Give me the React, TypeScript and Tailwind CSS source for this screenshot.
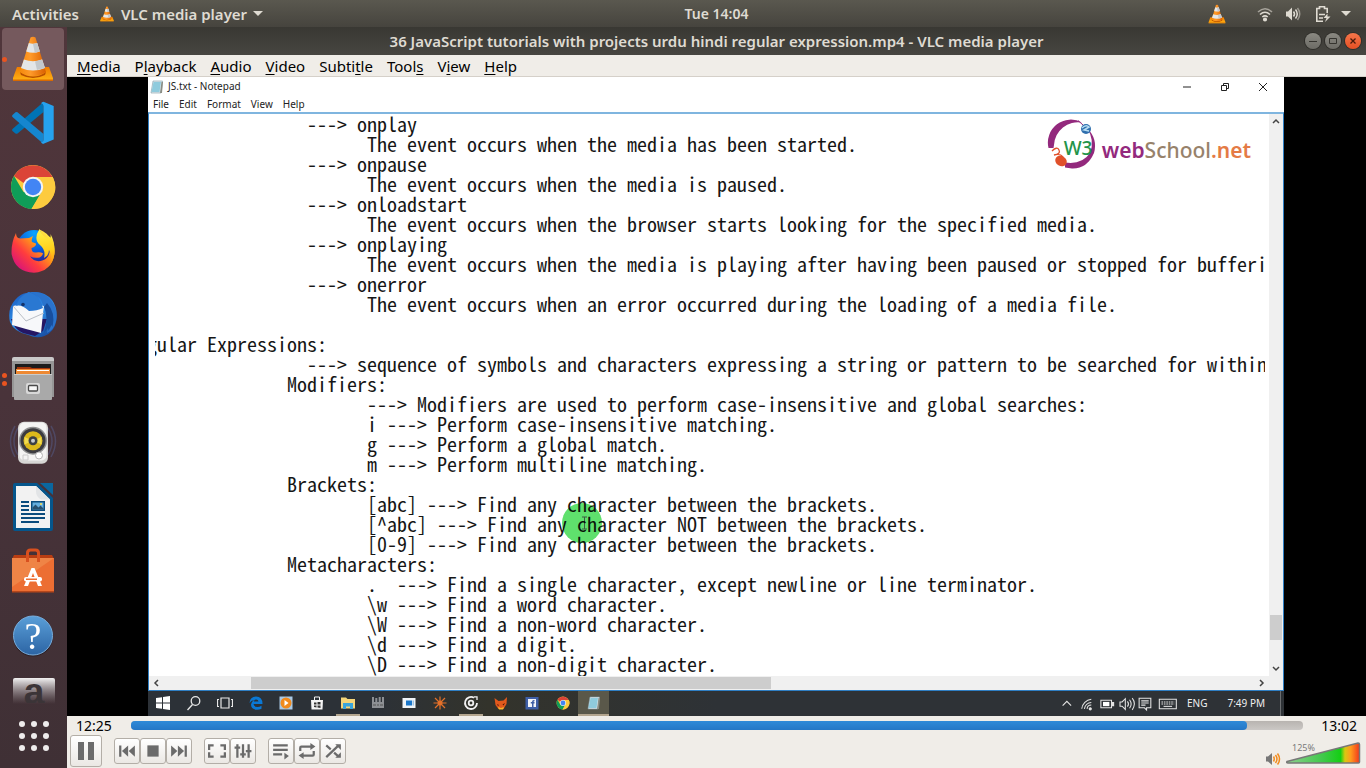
import type { ReactNode } from "react";

const DOC = [
  "                  ---> onplay",
  "                        The event occurs when the media has been started.",
  "                  ---> onpause",
  "                        The event occurs when the media is paused.",
  "                  ---> onloadstart",
  "                        The event occurs when the browser starts looking for the specified media.",
  "                  ---> onplaying",
  "                        The event occurs when the media is playing after having been paused or stopped for bufferi",
  "                  ---> onerror",
  "                        The event occurs when an error occurred during the loading of a media file.",
  "",
  "Regular Expressions:",
  "                  ---> sequence of symbols and characters expressing a string or pattern to be searched for within",
  "                Modifiers:",
  "                        ---> Modifiers are used to perform case-insensitive and global searches:",
  "                        i ---> Perform case-insensitive matching.",
  "                        g ---> Perform a global match.",
  "                        m ---> Perform multiline matching.",
  "                Brackets:",
  "                        [abc] ---> Find any character between the brackets.",
  "                        [^abc] ---> Find any character NOT between the brackets.",
  "                        [0-9] ---> Find any character between the brackets.",
  "                Metacharacters:",
  "                        .  ---> Find a single character, except newline or line terminator.",
  "                        \\w ---> Find a word character.",
  "                        \\W ---> Find a non-word character.",
  "                        \\d ---> Find a digit.",
  "                        \\D ---> Find a non-digit character.",
].join("\n");

function Cone({ className }: { className: string }) {
  return (
    <svg viewBox="0 0 48 48" className={className} aria-hidden="true">
      <defs>
        <linearGradient id="coneO" x1="0" x2="1">
          <stop offset="0" stopColor="#f58a0c" />
          <stop offset=".4" stopColor="#ff9a2a" />
          <stop offset="1" stopColor="#d95f00" />
        </linearGradient>
        <linearGradient id="coneB" x1="0" x2="0" y1="0" y2="1">
          <stop offset="0" stopColor="#f07c00" />
          <stop offset="1" stopColor="#ffb515" />
        </linearGradient>
      </defs>
      <path d="M8 32h32l4 11v3H4v-3z" fill="url(#coneB)" />
      <path d="M4 44.500h40V46H4z" fill="#d96a00" />
      <path d="M11 37Q24 46 37 37l-1 3Q24 46 12 40z" fill="#b94f00" />
      <path d="M21.500 2.500Q24 1 26.500 2.500L37 37Q24 45 11 37z" fill="url(#coneO)" />
      <path d="M19.800 8q4.200 1.500 8.400 0l2.600 8.500q-6.800 2.600-13.600 0z" fill="#e3e6e8" />
      <path d="M14.900 24.500q9.100 3.600 18.200 0l2.900 8.500q-12 5-24 0z" fill="#e3e6e8" />
      <path d="M24 9l4.200-1 2.600 8.500-5 1.200zM26 26.500l7.100-2 2.900 8.500-8 2z" fill="#c3c8cc" />
    </svg>
  );
}

function Chrome({ className }: { className: string }) {
  return (
    <svg viewBox="0 0 48 48" className={className} aria-hidden="true">
      <circle cx="24" cy="24" r="22" fill="#fdcb3f" />
      <path d="M4.900 13A22 22 0 0 1 43.100 13.500L43.500 14H24L14.500 20z" fill="#db4437" />
      <path d="M5 13A22 22 0 0 0 22.500 46L33 28 24 24 14.500 29z" fill="#0f9d58" />
      <path d="M22.500 46A22 22 0 0 0 43.800 14H24l9 15z" fill="#fdcb3f" />
      <circle cx="24" cy="24" r="10.200" fill="#f4f4f4" />
      <circle cx="24" cy="24" r="8.200" fill="#4285f4" />
    </svg>
  );
}

function Code() {
  return (
    <svg viewBox="0 0 48 48" className="size-12" aria-hidden="true">
      <path d="M34.500 13L8.500 34.500q-1 .6-2 0L3.500 32q-1-1 0-2L34.500 3z" fill="#0073b5" />
      <path d="M34.500 35L8.500 13.300q-1-.6-2 0L3.500 16q-1 1 0 2L34.500 45z" fill="#1586cf" />
      <path d="M34.500 2.700L44.700 7v33.500L34.500 44.800q-1.500 0-2.500-1.500 2.500 0 2.500-2.500V7q0-2.500-2.500-2.700 1-1.500 2.500-1.600z" fill="#26a2ee" />
    </svg>
  );
}

function Firefox() {
  return (
    <svg viewBox="0 0 48 48" className="size-12" aria-hidden="true">
      <defs>
        <linearGradient id="ffBody" x1="0.9" y1="0.1" x2="0.1" y2="0.9">
          <stop offset="0" stopColor="#fff44f" />
          <stop offset=".35" stopColor="#ff9a1a" />
          <stop offset=".65" stopColor="#ff3d3d" />
          <stop offset="1" stopColor="#d5107f" />
        </linearGradient>
        <linearGradient id="ffTail" x1="0.4" y1="0" x2="0.5" y2="1">
          <stop offset="0" stopColor="#fff24a" />
          <stop offset=".6" stopColor="#ffcf1a" />
          <stop offset="1" stopColor="#ff8a14" />
        </linearGradient>
        <radialGradient id="ffGlobe" cx=".5" cy=".1" r=".9">
          <stop offset="0" stopColor="#0aa5ff" />
          <stop offset=".6" stopColor="#0a55d8" />
          <stop offset="1" stopColor="#30208c" />
        </radialGradient>
      </defs>
      <circle cx="25" cy="20" r="17" fill="url(#ffGlobe)" />
      <path d="M7 6Q7 11 11 11.500L20 11l4-2q-2 4-1 6l4 1.500q.5 3-4.500 4.500 0 5 4.500 4.500 4-.8 7 .8-1 4-5 4.500-5 .3-8-1.500 5 7 13 4 9-4 6-16Q33 10 30.500 2.500 39 6 41 12q1-2 .5-5Q46 15 45.600 26 43 44.500 25 45.700 6 45 2.600 27 2 16 7 6z" fill="url(#ffBody)" />
      <path d="M30.500 2Q24 12 31 18q6 5 4 13 5-2 5-8 5 7 0 16 6-6 5.500-17Q45 12 39 8.500q0 2 .5 3.500Q32 8 30.500 2z" fill="url(#ffTail)" />
    </svg>
  );
}

function Thunderbird() {
  return (
    <svg viewBox="0 0 48 48" className="size-12" aria-hidden="true">
      <defs>
        <linearGradient id="tb" x1=".2" y1="0" x2=".8" y2="1">
          <stop offset="0" stopColor="#1c5fc2" />
          <stop offset=".5" stopColor="#2f8fe8" />
          <stop offset="1" stopColor="#174a9e" />
        </linearGradient>
      </defs>
      <path d="M18 2Q34-2 43 9q6 8 4.500 20-2 12-12 16-8 3-16-1Q5 41 1 31-2 18 6 9 12 2 18 2z" fill="url(#tb)" />
      <path d="M2 28Q5 38 14 42L26 45 34 40 38 28z" fill="#251764" />
      <path d="M4 15L18 12 35 15 34 22 32 42 17 38 3 34z" fill="#f7f8fa" />
      <path d="M4 15L17 30 35 22" fill="none" stroke="#b9bec6" />
      <path d="M6 17Q9 5 20 1q12 3 14 13 8 10 4 28 7-3 9-12 2-12-5-21Q34 0 22 1 9 4 6 17z" fill="#2a73cc" />
      <path d="M7 15Q10 5 20 1q11 4 14 16-6 3-14 3Q12 13 7 15z" fill="#2a78d2" />
      <path d="M35 16q5 10 0 26l4-5 .5 3 3-6 1 2Q47 22 38 12z" fill="#174e9e" />
      <circle cx="14" cy="13.500" r="1.800" fill="#14336b" />
    </svg>
  );
}

function Files() {
  return (
    <svg viewBox="0 0 48 48" className="size-12" aria-hidden="true">
      <path d="M3 4q0-2 2-2h38q2 0 2 2v38H3z" fill="#c9c9c9" />
      <path d="M3 6h42v36H3z" fill="#969696" />
      <path d="M6 9h36v12H6z" fill="#1c1c1c" />
      <path d="M8 12h13l2 1h18v8H7z" fill="#a5370c" />
      <path d="M7 14h34v5H7z" fill="#ee8933" />
      <path d="M8 15h32v1H8z" fill="#fff" />
      <path d="M5 19h38v25q0 1-1 1H6q-1 0-1-1z" fill="#a9a9a9" />
      <path d="M5 19h38v1H5z" fill="#ccc" />
      <rect x="17" y="28" width="14" height="11" rx="2" fill="#d8d8d8" />
      <rect x="19.500" y="30.500" width="9" height="5.500" rx="1" fill="#f8f8f8" stroke="#4a4a4a" strokeWidth="1.300" />
    </svg>
  );
}

function Rhythmbox() {
  return (
    <svg viewBox="0 0 48 48" className="size-12" aria-hidden="true">
      <g fill="none" stroke="#5a6aa0" strokeOpacity=".4" strokeWidth="1.500">
        <path d="M6 7Q-3 22 6 38M9 9Q1 22 9 36M42 7Q51 22 42 38M39 9Q47 22 39 36" />
      </g>
      <rect x="9" y="2.700" width="30" height="42" rx="6" fill="#d6d6d4" />
      <rect x="10.500" y="3.500" width="27" height="38" rx="5" fill="#f4f4f3" />
      <circle cx="24" cy="21.700" r="14" fill="#8f9090" />
      <circle cx="24" cy="21.700" r="12.500" fill="#3c3c40" />
      <circle cx="24" cy="21.700" r="9.500" fill="#dcb91b" />
      <path d="M24 21.700L15.500 18v7.500zM24 21.700l8.500-3.700v7.500z" fill="#f1dc50" />
      <circle cx="24" cy="21.700" r="4.500" fill="#3c4044" />
      <circle cx="24" cy="21.700" r="2" fill="#c7cbd0" />
      <circle cx="30" cy="36.500" r="3.500" fill="#fff" stroke="#b5b5b5" />
      <path d="M14 36h5v5h-5z" fill="none" stroke="#ccc" />
    </svg>
  );
}

function Writer() {
  return (
    <svg viewBox="0 0 48 48" className="size-12" aria-hidden="true">
      <path d="M4 2q0-2 2-2h22l16 15v31q0 2-2 2H6q-2 0-2-2z" fill="#05568c" />
      <path d="M31 0h13v12z" fill="#0a679f" />
      <path d="M7 3h20l14 13.500V45H7z" fill="#f2f2f2" />
      <path d="M27 3l14 13.500h-9q-5-3-5-8z" fill="#e2e4e6" />
      <g fill="#0b4c7d">
        <path d="M12 18h8v2h-8zM12 22h8v2h-8zM12 26h8v2h-8zM12 30h24v2H12zM12 34h24v2H12zM12 38h18v2H12z" />
        <path d="M22 18h14v10H22z" />
      </g>
      <path d="M23.500 19.500h11v7h-11z" fill="#65aede" />
      <path d="M23.500 26.500v-2l3-3 3 3 2-2 3 3v1z" fill="#28506e" />
      <circle cx="32" cy="21" r="1" fill="#ffe14c" />
    </svg>
  );
}

function Software() {
  return (
    <svg viewBox="0 0 48 48" className="size-12" aria-hidden="true">
      <path d="M5 8h38l2 4H3z" fill="#b83d12" />
      <path d="M3 11h42v34H3z" fill="#ec6e33" />
      <path d="M3 11h42L3 40z" fill="#ef8446" />
      <path d="M3 44h42v1.500H3z" fill="#b6471b" />
      <path d="M18.500 15V6q0-3 3-3h5q3 0 3 3v9" fill="none" stroke="#d8501f" strokeWidth="3" />
      <path d="M15 39l7.500-18h3L33 39h-4l-5-13-5 13z" fill="#fff" />
      <rect x="15" y="30" width="18" height="4.500" rx="2" fill="#fff" />
      <path d="M17 31.500h11v1.500H17z" fill="#ec6e33" />
    </svg>
  );
}

function Help() {
  return (
    <svg viewBox="0 0 48 48" className="size-12" aria-hidden="true">
      <defs>
        <linearGradient id="help" x1="0" x2="0" y1="0" y2="1">
          <stop offset="0" stopColor="#5a9fd8" />
          <stop offset="1" stopColor="#2c64a4" />
        </linearGradient>
      </defs>
      <circle cx="24" cy="25.500" r="20" fill="#302228" />
      <circle cx="24" cy="24.500" r="19.500" fill="url(#help)" stroke="#79aedd" />
      <text x="24" y="38" textAnchor="middle" fill="#fff" fontSize="38" fontFamily="Liberation Serif, serif">?</text>
    </svg>
  );
}

function Amazon() {
  return (
    <svg viewBox="0 0 48 48" className="size-12" aria-hidden="true">
      <defs>
        <linearGradient id="amz" x1="0" x2="0" y1="0" y2="1">
          <stop offset="0" stopColor="#f2f2f2" />
          <stop offset="1" stopColor="#a8a0a3" stopOpacity="0" />
        </linearGradient>
        <clipPath id="amzClip"><path d="M0 0h48v28H0z" /></clipPath>
      </defs>
      <path d="M3 5q0-2 2-2h38q2 0 2 2v24H3z" fill="url(#amz)" />
      <g clipPath="url(#amzClip)">
        <text x="24" y="29" textAnchor="middle" fill="#3b3437" fontSize="37" fontFamily="Liberation Sans, sans-serif" fontWeight="bold">a</text>
      </g>
    </svg>
  );
}

const DOCK: { name: string; icon: ReactNode; dots: number; active?: boolean }[] = [
  { name: "VLC media player", icon: <Cone className="size-12" />, dots: 1, active: true },
  { name: "Visual Studio Code", icon: <Code />, dots: 0 },
  { name: "Google Chrome", icon: <Chrome className="size-12" />, dots: 0 },
  { name: "Firefox", icon: <Firefox />, dots: 0 },
  { name: "Thunderbird Mail", icon: <Thunderbird />, dots: 0 },
  { name: "Files", icon: <Files />, dots: 2 },
  { name: "Rhythmbox", icon: <Rhythmbox />, dots: 0 },
  { name: "LibreOffice Writer", icon: <Writer />, dots: 0 },
  { name: "Ubuntu Software", icon: <Software />, dots: 0 },
  { name: "Help", icon: <Help />, dots: 0 },
];

function Dock() {
  return (
    <nav aria-label="Dock" className="flex w-[67px] shrink-0 flex-col overflow-hidden bg-linear-to-b from-[#50363b] via-[#49333a] to-[#3f3035]">
      {DOCK.map((d) => (
        <div key={d.name} className="flex h-16 shrink-0 items-center">
          <button
            type="button"
            aria-label={d.name}
            className={
              d.active
                ? "relative ml-0.5 flex size-[62px] items-center justify-center rounded bg-[#75595d]"
                : "relative ml-0.5 flex size-[62px] items-center justify-center rounded"
            }
          >
            {d.icon}
            <span className="absolute left-0 flex flex-col gap-[3px]">
              {Array.from({ length: d.dots }, (_, i) => (
                <span key={i} className="size-[5px] rounded-full bg-[#e95420]" />
              ))}
            </span>
          </button>
        </div>
      ))}
      <button type="button" aria-label="Amazon" className="flex min-h-0 flex-1 items-start justify-center overflow-hidden pt-2">
        <Amazon />
      </button>
      <button type="button" aria-label="Show Applications" className="flex h-16 shrink-0 items-center justify-center">
        <svg viewBox="0 0 32 32" className="size-8" fill="#eeecec" aria-hidden="true">
          {[4, 16, 28].map((y) => [4, 16, 28].map((x) => <circle key={`${x}-${y}`} cx={x} cy={y} r="3" />))}
        </svg>
      </button>
    </nav>
  );
}

function TopBar() {
  return (
    <header className="grid h-[27px] shrink-0 grid-cols-3 items-center bg-linear-to-b from-[#5a584f] to-[#46443e] text-[15px] leading-6 font-semibold text-[#dfdbd2]">
      <div className="flex items-center pl-3">
        <button type="button">Activities</button>
        <button type="button" className="ml-5 flex items-center gap-1.5">
          <Cone className="size-4" />
          VLC media player
          <span className="h-0 w-0 border-x-[5px] border-t-[5px] border-x-transparent border-t-[#dfdbd2]" />
        </button>
      </div>
      <button type="button" className="ml-[67px] justify-self-center text-sm">Tue 14:04</button>
      <div className="flex items-center justify-end pr-[15px]">
        <Cone className="mr-[30px] size-5" />
        <svg viewBox="0 0 16 16" className="mr-3 size-4" fill="none" stroke="#dfdbd2" strokeWidth="1.600" aria-hidden="true">
          <path d="M1 6Q8-.5 15 6" strokeOpacity=".6" />
          <path d="M3 8.500q5-4.500 10 0M5.300 11q2.700-2.400 5.400 0" />
          <circle cx="8" cy="13.500" r="1.300" fill="#dfdbd2" />
        </svg>
        <svg viewBox="0 0 16 16" className="mr-3.5 size-4" fill="none" stroke="#dfdbd2" strokeWidth="1.500" aria-hidden="true">
          <path d="M1 5.500h2l4-4v13l-4-4H1z" fill="#dfdbd2" stroke="none" />
          <path d="M8.500 5.500q2 2.500 0 5M10.500 3.500q3.500 4.500 0 9" />
          <path d="M12.500 2q4.500 6 0 12" strokeOpacity=".5" />
        </svg>
        <svg viewBox="0 0 16 18" className="mr-2.5 h-[18px] w-4" fill="none" stroke="#dfdbd2" strokeWidth="1.600" aria-hidden="true">
          <path d="M8 16.200H1.800V3.500H4.500V1.800h5v1.700h2.700V8" />
          <path d="M4 9.500h6M4 13h4" />
          <path d="M12.500 8.500L8.500 13h3L10 17l5.500-5.500h-3z" fill="#dfdbd2" stroke="none" />
        </svg>
        <span className="h-0 w-0 border-x-[5px] border-t-[5px] border-x-transparent border-t-[#dfdbd2]" />
      </div>
    </header>
  );
}

function TitleBar() {
  const round = "flex size-4 items-center justify-center rounded-full bg-linear-to-b from-[#8a8982] to-[#6d6c66] ring-1 ring-[#2f2e2a]";
  return (
    <div className="grid h-7 shrink-0 grid-cols-[1fr_auto_1fr] items-center bg-linear-to-b from-[#393833] to-[#474641]">
      <h1 className="col-start-2 text-[15px] leading-6 font-semibold text-[#dfdbd2]">
        36 JavaScript tutorials with projects urdu hindi regular expression.mp4 - VLC media player
      </h1>
      <div className="flex justify-end gap-1 pr-[5px]">
        <button type="button" aria-label="Minimize" className={round}>
          <svg viewBox="0 0 16 16" className="size-4" stroke="#35342f" fill="none"><path d="M4 8.500h8" /></svg>
        </button>
        <button type="button" aria-label="Maximize" className={round}>
          <svg viewBox="0 0 16 16" className="size-4" stroke="#35342f" fill="none"><path d="M4.500 5.500h7v5h-7z" /></svg>
        </button>
        <button type="button" aria-label="Close" className="flex size-4 items-center justify-center rounded-full bg-linear-to-b from-[#f5764a] to-[#e64f22] ring-1 ring-[#2f2e2a]">
          <svg viewBox="0 0 16 16" className="size-4" stroke="#4a1a0a" strokeWidth="1.300" fill="none"><path d="M5.500 5.500l5 5M10.500 5.500l-5 5" /></svg>
        </button>
      </div>
    </div>
  );
}

const MENUS: [string, string, string][] = [
  ["", "M", "edia"],
  ["P", "l", "ayback"],
  ["", "A", "udio"],
  ["", "V", "ideo"],
  ["Subti", "t", "le"],
  ["Tool", "s", ""],
  ["V", "i", "ew"],
  ["", "H", "elp"],
];

function MenuBar() {
  return (
    <div role="menubar" className="flex h-[22px] shrink-0 items-center gap-3.5 border-b border-[#d5d0c9] bg-[#f0ede8] px-2.5 text-[15px] leading-5 text-black">
      {MENUS.map(([a, b, c]) => (
        <button key={a + b + c} type="button" role="menuitem">
          {a}
          <span className="underline underline-offset-2">{b}</span>
          {c}
        </button>
      ))}
    </div>
  );
}

function NotepadIcon({ className }: { className: string }) {
  return (
    <svg viewBox="0 0 14 14" className={className} aria-hidden="true">
      <path d="M3 1h9.500L11 13H1z" fill="#dfe9ee" stroke="#7d9aa6" strokeWidth=".6" />
      <path d="M3.500 2H11L9.500 12h-8z" fill="#8fcbdd" />
      <path d="M11.500 2l1.500 0-1 11H10z" fill="#8a8d84" />
    </svg>
  );
}

function SiteLogo() {
  return (
    <div className="absolute top-[3px] right-8 flex items-center gap-1">
      <svg viewBox="0 0 54 54" className="size-[54px]" aria-hidden="true">
        <path d="M4.500 31A23 23 0 0 1 38 5.500 24 24 0 0 0 10 28L9.500 31z" fill="#93297d" />
        <path d="M43 11Q54 22 50 36 43 52 28 51.500L21 50.500 21 45.500Q38 48 46 36 51 23 43 11z" fill="#93297d" />
        <path d="M34 3.500l5 4.500" stroke="#93297d" strokeWidth="1" />
        <circle cx="42" cy="12" r="5" fill="#2f6fae" />
        <path d="M38 11q4-4 7-1l-5 3 5 1" fill="none" stroke="#b7dcf2" strokeWidth="1.500" />
        <ellipse cx="17" cy="44" rx="6" ry="5" fill="#e0502a" transform="rotate(30 17 44)" />
        <path d="M8 34q5-5 7-1t-5 5q6-2 9 2" fill="none" stroke="#e0502a" strokeWidth="1.300" />
        <text x="34" y="38" textAnchor="middle" fontSize="19" fontWeight="500" fontFamily="Noto Sans, sans-serif" fill="#23944a">W3</text>
      </svg>
      <p className="mt-3 font-['Noto_Sans',sans-serif] text-[21px] leading-8 font-semibold text-[#93297d]">
        web<span className="font-medium text-[#97826b]">School</span><span className="text-[#e47b45]">.net</span>
      </p>
    </div>
  );
}

function Notepad() {
  return (
    <section aria-label="JS.txt - Notepad" className="flex min-h-0 flex-1 flex-col bg-white text-[10px] text-[#222]">
      <div className="flex h-[19px] shrink-0 items-center gap-1 pl-0.5">
        <NotepadIcon className="size-3.5" />
        <span className="flex-1">JS.txt - Notepad</span>
        <div className="flex items-center gap-6 pr-3.5">
          {["M3 7h8", "M3.500 5.500h5v5h-5zM5.500 5V3.500h5v5H9", "M3 3l8 8M11 3l-8 8"].map((d, i) => (
            <button key={d} type="button" aria-label={["Minimize", "Restore", "Close"][i]}>
              <svg viewBox="0 0 14 14" className="size-3.5" fill="none" stroke="#222"><path d={d} /></svg>
            </button>
          ))}
        </div>
      </div>
      <div role="menubar" className="flex h-4 shrink-0 items-center gap-2.5 px-[5px]">
        {["File", "Edit", "Format", "View", "Help"].map((m) => (
          <button key={m} type="button" role="menuitem">{m}</button>
        ))}
      </div>
      <div className="relative flex min-h-0 flex-1 border border-t-2 border-[#2f7fc4] border-t-[#7fb5df]">
        <div className="flex min-w-0 flex-1 flex-col">
          <div className="ml-1.5 mr-1 min-h-0 flex-1 overflow-hidden">
            <pre className="-ml-7 font-['Noto_Sans_Mono_CJK_SC','Liberation_Mono',monospace] text-xl leading-5 text-[#161616]">{DOC}</pre>
          </div>
          <div className="flex h-3.5 shrink-0 items-center justify-between bg-[#f0f0f0]">
            <svg viewBox="0 0 14 14" className="size-3.5" fill="none" stroke="#444" strokeWidth="1.500"><path d="M9 4L6 7l3 3" /></svg>
            <div className="ml-[88px] h-3 w-[520px] bg-[#cdcdcd]" />
            <div className="flex-1" />
            <svg viewBox="0 0 14 14" className="size-3.5" fill="none" stroke="#444" strokeWidth="1.500"><path d="M5 4l3 3-3 3" /></svg>
          </div>
        </div>
        <div className="flex w-3.5 shrink-0 flex-col items-center bg-[#f0f0f0] pb-3.5">
          <svg viewBox="0 0 14 14" className="size-3.5" fill="none" stroke="#444" strokeWidth="1.500"><path d="M4 9l3-3 3 3" /></svg>
          <div className="flex-1" />
          <div className="mb-[22px] h-[25px] w-3 bg-[#cdcdcd]" />
          <svg viewBox="0 0 14 14" className="size-3.5" fill="none" stroke="#444" strokeWidth="1.500"><path d="M4 5l3 3 3-3" /></svg>
        </div>
        <SiteLogo />
        <svg viewBox="0 0 42 42" className="absolute top-[388px] left-[413px] size-[42px] mix-blend-multiply" aria-hidden="true">
          <circle cx="20" cy="21" r="20" fill="#5fe06d" />
          <path d="M20 15h5M20 27h5M22.500 15v12" stroke="#3d5b42" fill="none" />
        </svg>
      </div>
    </section>
  );
}

const TASKS: { name: string; icon: ReactNode; open?: boolean; active?: boolean }[] = [
  { name: "Start", icon: <path d="M1 3l6-.8V7.500H1zM8 2l7-1v6.500H8zM1 8.500h6v5.300L1 13zM8 8.500h7V15l-7-1z" fill="#fff" /> },
  { name: "Search", icon: <g fill="none" stroke="#e8e8e8" strokeWidth="1.300"><circle cx="9.500" cy="6" r="4.300" /><path d="M6.500 9.500L1.500 15" /></g> },
  { name: "Task View", icon: <g fill="none" stroke="#e8e8e8" strokeWidth="1.200"><path d="M4 3h8v10H4zM2 4.500H.5v7H2M14 4.500h1.500v7H14" /></g> },
  { name: "Edge", icon: <path d="M1.500 8Q2 1.500 8 1.500q6.500 0 6.500 7.500H5.500q.5 3 4 3 2 0 4-1.200v3Q11 15 8.500 14.800 3 14 3 9.500 3.500 6.500 6 5 3 5.500 1.500 8zM5.800 6.500h4.700Q10.200 4.500 8.200 4.500q-2 0-2.400 2z" fill="#0b78d4" /> },
  { name: "Media Player", icon: <g><path d="M1.500 1.500h13v13h-13z" fill="#a9c8e4" /><circle cx="8" cy="8" r="5.500" fill="#f08a1d" /><path d="M6.500 5l4 3-4 3z" fill="#fff" /></g> },
  { name: "Store", icon: <g><path d="M2 5h12l-.5 9.500h-11z" fill="#f4f4f4" /><path d="M5.500 5V2h5v3" fill="none" stroke="#f4f4f4" /><path d="M5 7.500h2.500V9.500H5zM8.500 7h3v2.500h-3zM5 10.500h2.500v2L5 12zM8.500 10.500h3v2.500l-3-.5z" fill="#333" /></g> },
  { name: "File Explorer", icon: <g><path d="M1 2.500h5l1.500 1.500H15v9.500H1z" fill="#f6d57a" /><path d="M3 8h10v6h-3v-2.500H6V14H3z" fill="#3aa5dc" /></g>, open: true },
  { name: "Movie Maker", icon: <g fill="#8d9094"><path d="M2 7h12v6H2zM2 2h2v5H2zM5.300 3h2v4h-2zM8.700 2h2v5h-2zM12 2h2v5h-2z" /><path d="M3 9.500h3v1H3zM7 9.500h2v1H7zM10 9.500h3v1h-3z" fill="#555" /></g> },
  { name: "Presentation", icon: <g><path d="M1.500 3h13v10h-13z" fill="#f0f4f7" /><path d="M5 5.500h6v5H5z" fill="#1976c9" /><path d="M11.500 5.500h1.500v5h-1.500z" fill="#9cc4e6" /></g> },
  { name: "Splash", icon: <g><circle cx="8" cy="8" r="2.500" fill="#e3702a" /><path d="M8 1.500v13M1.500 8h13M3 3l10 10M13 3L3 13" stroke="#e3702a" strokeWidth="1.200" /></g> },
  { name: "Groove", icon: <g fill="none" stroke="#f0f0f0"><path d="M11 2.800A6 6 0 1 0 14 8" strokeWidth="1.800" /><circle cx="8" cy="8" r="2.300" strokeWidth="1.800" /><path d="M11 1.800h3V5" strokeWidth="1.300" /></g>, open: true },
  { name: "Fox", icon: <g><path d="M1.500 3l4 3 5-.5L14 2l-.5 7-3 5h-5l-3-4z" fill="#e2591c" /><path d="M4 9l2 1-1 1zM12 8l-2.500 1.500 1 1z" fill="#4b1707" /><path d="M5 12l3 1 3-1-1 2.500H6z" fill="#f7b52c" /></g> },
  { name: "Facebook", icon: <g><path d="M1.500 2h13v12.500h-13z" fill="#3f5fa6" /><path d="M4 4h8v8H4z" fill="#f3f5f9" /><path d="M8 12V8.500H6.800V7H8q0-2.500 2.500-2v1.300q-1-.2-1 .7h1v1.500h-1V12z" fill="#3f5fa6" /></g> },
  { name: "Chrome", icon: null },
  { name: "Notepad", icon: null, open: true, active: true },
];

function Taskbar() {
  return (
    <div className="flex h-[25px] shrink-0 items-stretch bg-linear-to-r from-[#2c3137] from-20% via-[#33332b] via-30% to-[#2e3236] to-50% text-[10px] text-[#f0f0f0]">
      <div className="grid w-[461px] shrink-0 grid-cols-15">
        {TASKS.map((t) => (
          <button
            key={t.name}
            type="button"
            aria-label={t.name}
            className={t.active ? "flex flex-col items-center justify-end bg-[#5a584a]" : "flex flex-col items-center justify-end"}
          >
            {t.name === "Chrome" ? (
              <Chrome className="mb-1 size-3.5" />
            ) : t.name === "Notepad" ? (
              <NotepadIcon className="mb-1 size-3.5" />
            ) : (
              <svg viewBox="0 0 16 16" className="mb-[3px] size-4" aria-hidden="true">{t.icon}</svg>
            )}
            <span className={t.active ? "h-0.5 w-full bg-[#b4a68f]" : t.open ? "h-0.5 w-6 bg-[#b4a68f]" : "h-0.5 w-6"} />
          </button>
        ))}
      </div>
      <div className="flex flex-1 items-center justify-end">
        <svg viewBox="-5 0 110 16" className="mr-2 h-[17px] w-[118px]" fill="none" stroke="#e4e4e4" aria-hidden="true">
          <path d="M-4 10l4-4 4 4" />
          <path d="M14 13A10 10 0 0 1 23 4M16.500 13A7 7 0 0 1 23 7M19 13a4 4 0 0 1 4-3.500" />
          <circle cx="22" cy="13" r="1" fill="#e4e4e4" />
          <path d="M32 5h10v7H32zM43 7h1v3h-1z" />
          <path d="M34 6.500h6v4h-6z" fill="#fff" stroke="none" />
          <path d="M50 6.500h2l3-3v10l-3-3h-2zM57 6q2 2.500 0 5M59 4.500q3 4 0 8M61.500 3q4 5 0 11" />
          <path d="M68 3h11v9h-4v2l-2-2h-5zM70 5.500h7M70 7.500h7M70 9.500h4" />
          <path d="M87 4h16v9H87z" />
          <path d="M89 6.500h12M89 8.500h12" strokeDasharray="1.500 .8" />
          <path d="M91 10.700h8" />
        </svg>
        <span className="mr-5">ENG</span>
        <span>7:49 PM</span>
        <span className="ml-[15px] h-full w-px bg-[#6b6e70]" />
        <span className="w-[3px]" />
      </div>
    </div>
  );
}

const CONTROL_GROUPS: { name: string; icon: ReactNode }[][] = [
  [
    { name: "Previous", icon: <path d="M1 3h2v10H1zM9 3v10L3.500 8zM15 3v10L9.500 8z" /> },
    { name: "Stop", icon: <path d="M3 3h10v10H3z" /> },
    { name: "Next", icon: <path d="M13 3h2v10h-2zM7 3v10l5.500-5zM1 3v10l5.500-5z" /> },
  ],
  [
    { name: "Fullscreen", icon: <path d="M0 2h5v2H2v3H0zM11 2h5v5h-2V4h-3zM0 9h2v3h3v2H0zM14 9h2v5h-5v-2h3z" /> },
    { name: "Extended settings", icon: <path d="M2 2h2v2h1.500v2H4v8H2V6H.5V4H2zM7 2h2v8h1.500v2H9v2H7v-2H5.500v-2H7zM12 2h2v5h1.500v2H14v5h-2V9h-1.500V7H12z" /> },
  ],
  [
    { name: "Playlist", icon: <path d="M1 2h13v2H1zM1 6h13v2H1zM1 10h8v2H1zM11 9.500l4 3-4 3z" /> },
    { name: "Loop", icon: <g fill="none" stroke="#6b6b6b" strokeWidth="2"><path d="M2 8V5q0-1 1-1h9M14 8v3q0 1-1 1H4" /><path d="M11 .8L15.500 4 11 7zM5 9L.5 12 5 15z" fill="#6b6b6b" stroke="none" /></g> },
    { name: "Random", icon: <g fill="none" stroke="#6b6b6b" strokeWidth="2"><path d="M2 13.500L13 3M2 3l4 3.500M9 9.500l4 3.500" /><path d="M10 2h5v5zM10 14h5V9z" fill="#6b6b6b" stroke="none" /></g> },
  ],
];

function Controls() {
  const shell = "flex items-center justify-center rounded-[3px] border border-[#b3aea7] bg-linear-to-b from-white to-[#ebe8e4]";
  return (
    <footer className="flex h-[52px] shrink-0 flex-col bg-[#f0ede8] text-black">
      <div className="flex h-[18px] items-center px-2 text-sm leading-[18px]">
        <span className="w-14 pt-0.5 pl-px">12:25</span>
        <div className="grid flex-1 items-center">
          <div className="h-[9px] rounded bg-linear-to-b from-[#b8b4b0] to-[#cbc8c5] [grid-area:1/1]">
            <div className="h-full w-[95.2%] rounded bg-linear-to-b from-[#2f8ad8] to-[#2577c6]" />
          </div>
          <input type="range" aria-label="Playback position" min={0} max={782} defaultValue={745} className="h-[9px] w-full opacity-0 [grid-area:1/1]" />
        </div>
        <span className="w-[55px] pt-0.5 pr-px text-right">13:02</span>
      </div>
      <div className="flex flex-1 items-center px-[3px]">
        <button type="button" aria-label="Pause" className={`${shell} size-8`}>
          <svg viewBox="0 0 16 18" className="h-[18px] w-4" fill="#6b6b6b"><path d="M0 0h6v18H0zM10 0h6v18h-6z" /></svg>
        </button>
        {CONTROL_GROUPS.map((g) => (
          <div key={g[0].name} className="ml-3 flex">
            {g.map((c) => (
              <button key={c.name} type="button" aria-label={c.name} className={`${shell} size-[26px]`}>
                <svg viewBox="0 0 16 16" className="size-[18px]" fill="#6b6b6b" aria-hidden="true">{c.icon}</svg>
              </button>
            ))}
          </div>
        ))}
        <button type="button" aria-label="Mute" className="mt-4 mr-1 ml-auto">
          <svg viewBox="0 0 16 14" className="h-3.5 w-4" fill="none" stroke="#f28c1e" strokeWidth="1.500" aria-hidden="true">
            <path d="M1 4.500h2L7 1v12L3 9.500H1z" fill="#777" stroke="none" />
            <path d="M8.500 4.500q1.500 2.500 0 5M10.500 3q3 4 0 8M12.500 1.500q4 5.500 0 11" />
          </svg>
        </button>
        <div className="grid pt-1 pr-0.5">
          <svg viewBox="0 0 76 24" className="h-6 w-[76px] [grid-area:1/1]" aria-hidden="true">
            <defs>
              <linearGradient id="vol" x1="0" x2="1">
                <stop offset="0" stopColor="#8fce8f" />
                <stop offset=".5" stopColor="#3fc94a" />
                <stop offset=".74" stopColor="#14cf14" />
                <stop offset=".8" stopColor="#d8c811" />
                <stop offset=".88" stopColor="#ff9a1e" />
                <stop offset="1" stopColor="#f2361c" />
              </linearGradient>
            </defs>
            <path d="M2 20.500L73 2q1.500 0 1.500 1.500V21q0 1-1 1H3q-2 0-1-1.500z" fill="url(#vol)" stroke="#777" strokeWidth="1.500" />
            <text x="7" y="10" fontSize="9" fill="#7a7a7a" fontFamily="Noto Sans, sans-serif">125%</text>
          </svg>
          <input type="range" aria-label="Volume" min={0} max={125} defaultValue={125} className="h-6 w-[76px] opacity-0 [grid-area:1/1]" />
        </div>
      </div>
    </footer>
  );
}

export default function App() {
  return (
    <div className="flex h-screen flex-col overflow-hidden font-['Noto_Sans','Open_Sans',sans-serif]">
      <TopBar />
      <div className="flex min-h-0 flex-1">
        <Dock />
        <main className="flex min-w-0 flex-1 flex-col">
          <TitleBar />
          <MenuBar />
          <div className="flex min-h-0 flex-1 justify-center bg-black pr-px">
            <div className="flex aspect-[1136/639] h-full flex-col overflow-hidden">
              <Notepad />
              <Taskbar />
            </div>
          </div>
          <Controls />
        </main>
      </div>
    </div>
  );
}
